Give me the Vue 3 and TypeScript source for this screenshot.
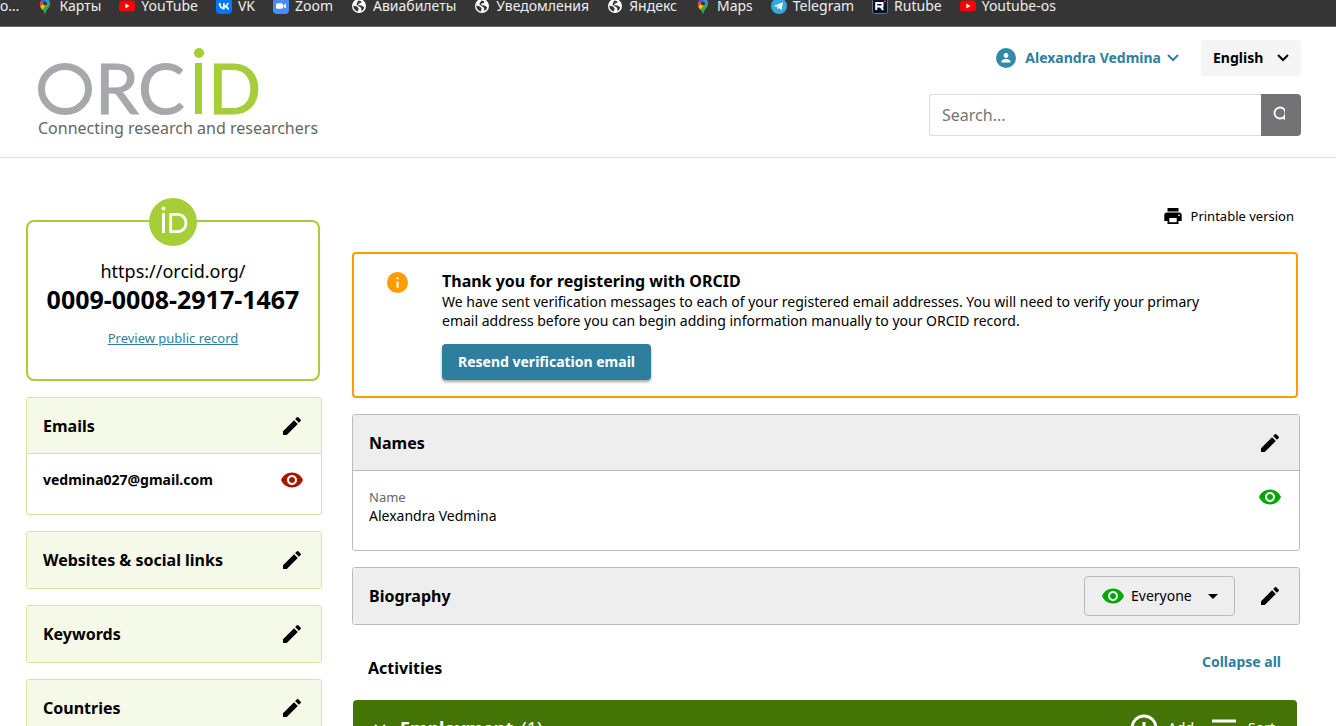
<script setup lang="ts">
import { ref } from 'vue'

type BookmarkIcon = 'none' | 'maps' | 'youtube' | 'vk' | 'zoom' | 'globe' | 'telegram' | 'rutube'

interface Bookmark {
  label: string
  icon: BookmarkIcon
}

interface SidePanel {
  title: string
  email?: string
}

const bookmarks: Bookmark[] = [
  { label: 'о…', icon: 'none' },
  { label: 'Карты', icon: 'maps' },
  { label: 'YouTube', icon: 'youtube' },
  { label: 'VK', icon: 'vk' },
  { label: 'Zoom', icon: 'zoom' },
  { label: 'Авиабилеты', icon: 'globe' },
  { label: 'Уведомления', icon: 'globe' },
  { label: 'Яндекс', icon: 'globe' },
  { label: 'Maps', icon: 'maps' },
  { label: 'Telegram', icon: 'telegram' },
  { label: 'Rutube', icon: 'rutube' },
  { label: 'Youtube-os', icon: 'youtube' },
]

const panels: SidePanel[] = [
  { title: 'Emails', email: 'vedmina027@gmail.com' },
  { title: 'Websites & social links' },
  { title: 'Keywords' },
  { title: 'Countries' },
]

const pencil =
  'M3 17.25V21h3.75L17.81 9.94l-3.75-3.75L3 17.25zM20.71 7.04a1 1 0 0 0 0-1.41l-2.34-2.34a1 1 0 0 0-1.41 0l-1.83 1.83 3.75 3.75 1.83-1.83z'
const eye =
  'M12 4.5C7 4.5 2.73 7.61 1 12c1.73 4.39 6 7.5 11 7.5s9.27-3.11 11-7.5c-1.73-4.39-6-7.5-11-7.5zM12 17c-2.76 0-5-2.24-5-5s2.24-5 5-5 5 2.24 5 5-2.24 5-5 5zm0-8c-1.66 0-3 1.34-3 3s1.34 3 3 3 3-1.34 3-3-1.34-3-3-3z'

const query = ref('')
const language = ref('English')
const visibility = ref('Everyone')
</script>

<template>
  <div class="page">
    <nav class="bookmarks" aria-label="Bookmarks">
      <a v-for="b in bookmarks" :key="b.label" class="bookmark" href="#">
        <svg v-if="b.icon === 'maps'" class="bm-icon" viewBox="0 0 16 16" aria-hidden="true">
          <path fill="#34a853" d="M3 8.2C4 10.600 7 12 7.500 15.200c.2.700.8.700 1 0C9 12 13 9.500 13.200 5.600L12.500 3z" />
          <path fill="#fbbc04" d="M3.200 8.600 8.800 2.500l2 3-5.600 6.300z" />
          <path fill="#1a73e8" d="M4 2.500 6.600 4.700 10 .6C7.600-.2 5.400.6 4 2.500z" />
          <path fill="#ea4335" d="M4 2.500C2.600 4.200 2.500 6.600 3.200 8.600L6.600 4.700z" />
          <path fill="#4285f4" d="M10 .6 6.600 4.700l3 2.500L12.600 3C12 1.800 11 .9 10 .6z" />
          <circle cx="8" cy="5.600" r="2" fill="#353535" />
        </svg>
        <svg v-else-if="b.icon === 'youtube'" class="bm-icon" viewBox="0 0 16 16" aria-hidden="true">
          <rect x="0" y="2.500" width="16" height="11" rx="3" fill="#f00" />
          <path fill="#fff" d="M6.300 5.600v4.800L10.500 8z" />
        </svg>
        <svg v-else-if="b.icon === 'vk'" class="bm-icon" viewBox="0 0 16 16" aria-hidden="true">
          <rect width="16" height="16" rx="4" fill="#07f" />
          <path fill="#fff" d="M8.600 11.500C5 11.500 2.900 9 2.800 5h1.800c.1 2.900 1.300 4.200 2.400 4.500V5h1.700v2.500C9.800 7.400 10.800 6.300 11.200 5h1.700c-.3 1.500-1.400 2.600-2.200 3.100.8.400 2 1.300 2.500 3.400h-1.900c-.4-1.200-1.400-2.200-2.600-2.300z" />
        </svg>
        <svg v-else-if="b.icon === 'zoom'" class="bm-icon" viewBox="0 0 16 16" aria-hidden="true">
          <rect width="16" height="16" rx="4" fill="#4a8cff" />
          <rect x="3" y="5.200" width="7" height="5.600" rx="1.500" fill="#fff" />
          <path fill="#fff" d="m10.500 7.200 2.500-1.800v5.200l-2.500-1.800z" />
        </svg>
        <svg v-else-if="b.icon === 'globe'" class="bm-icon" viewBox="0 0 16 16" aria-hidden="true">
          <circle cx="8" cy="8" r="7" fill="#fff" />
          <path fill="#353535" d="M2.300 7.600 6 8.400l1.600 1.800L7 13.400C4.400 13.200 2.300 10.800 2.300 7.600zM7.400 2.600l3 .6-.6 1.800-2.600.8.400 1.400 3 .4 2.600 1.600-.8 2.400-2 1.400-.4-3.200L7.400 8 5.200 6.200z" />
        </svg>
        <svg v-else-if="b.icon === 'telegram'" class="bm-icon" viewBox="0 0 16 16" aria-hidden="true">
          <circle cx="8" cy="8" r="8" fill="#34a9e0" />
          <path fill="#fff" d="m3 7.900 9-3.700-1.500 7.700-2.600-1.900-1.300 1.400-.3-2.400L10 6.200 5.200 8.900z" />
        </svg>
        <svg v-else-if="b.icon === 'rutube'" class="bm-icon" viewBox="0 0 16 16" aria-hidden="true">
          <rect x=".5" y=".5" width="15" height="15" rx="2" fill="#041330" stroke="#6a7280" />
          <path fill="none" stroke="#fff" stroke-width="2" d="M4.200 12V5h6.300v3.600H4.200M8.500 8.600l2.700 3.400" />
          <circle cx="13" cy="3.400" r="1.200" fill="#ed143b" />
        </svg>
        <span>{{ b.label }}</span>
      </a>
    </nav>

    <header class="header">
      <div class="brand">
        <svg class="logo" viewBox="0 0 224 68" role="img" aria-label="ORCID">
          <g class="logo-gray">
            <ellipse cx="27" cy="41" rx="23.500" ry="22.500" />
            <text x="57" y="66">R</text>
            <text x="100" y="66">C</text>
          </g>
          <g class="logo-green">
            <circle cx="161" cy="5" r="5" />
            <rect x="157" y="15" width="7" height="51" />
            <text x="170" y="66">D</text>
          </g>
        </svg>
        <span class="tagline">Connecting research and researchers</span>
      </div>

      <div class="tools">
        <div class="account">
          <button class="user" type="button">
            <svg class="avatar" viewBox="0 0 20 20" aria-hidden="true">
              <circle cx="10" cy="10" r="10" fill="#3489ab" />
              <circle cx="10" cy="7.500" r="2.400" fill="#fff" />
              <path fill="#fff" d="M5.500 14.500v-1c0-1.800 3-2.600 4.500-2.600s4.500.8 4.500 2.600v1z" />
            </svg>
            <span>Alexandra Vedmina</span>
            <svg class="chevron" viewBox="0 0 12 8" aria-hidden="true"><path d="m1 1 5 5 5-5" /></svg>
          </button>
          <div class="language">
            <select v-model="language" aria-label="Language">
              <option>English</option>
            </select>
            <svg class="chevron" viewBox="0 0 12 8" aria-hidden="true"><path d="m1 1 5 5 5-5" /></svg>
          </div>
        </div>
        <form class="search" role="search" @submit.prevent>
          <input v-model="query" type="text" placeholder="Search..." aria-label="Search" />
          <button type="submit" aria-label="Run search">
            <svg viewBox="0 0 12 14" aria-hidden="true">
              <circle cx="7" cy="7" r="5.500" fill="none" stroke="#fff" stroke-width="1.800" />
              <path stroke="#fff" stroke-width="2" d="m10 11 3 3" />
            </svg>
          </button>
        </form>
      </div>
    </header>

    <div class="content">
      <aside class="sidebar">
        <section class="id-card">
          <svg class="id-badge" viewBox="0 0 48 48" role="img" aria-label="ORCID iD">
            <circle cx="24" cy="24" r="24" fill="#a6ce39" />
            <circle cx="14.500" cy="10.500" r="1.900" fill="#fff" />
            <rect x="13" y="15" width="3" height="20" fill="#fff" />
            <path fill="none" stroke="#fff" stroke-width="2.800" d="M21.700 16.400h6.300c6 0 9 4.200 9 8.600s-3 8.600-9 8.600h-6.300z" />
          </svg>
          <span class="id-host">https://orcid.org/</span>
          <strong class="id-number">0009-0008-2917-1467</strong>
          <a class="preview" href="#">Preview public record</a>
        </section>

        <section v-for="p in panels" :key="p.title" class="panel green">
          <div class="panel-head">
            <h2>{{ p.title }}</h2>
            <button class="icon-button" type="button" :aria-label="'Edit ' + p.title">
              <svg viewBox="0 0 24 24" aria-hidden="true"><path :d="pencil" /></svg>
            </button>
          </div>
          <div v-if="p.email" class="email-row">
            <strong>{{ p.email }}</strong>
            <svg class="eye private" viewBox="0 0 24 24" aria-hidden="true"><path :d="eye" /></svg>
          </div>
        </section>
      </aside>

      <main class="main">
        <a class="print" href="#">
          <svg viewBox="0 0 20 20" aria-hidden="true">
            <path fill-rule="evenodd" d="M4.500 2h11v3.500h-11zM4 6.500h12a2.800 2.800 0 0 1 2.700 2.800V15h-3.200v3h-11v-3H1.300V9.300A2.800 2.800 0 0 1 4 6.500zM6.300 12v4.200h7.400V12zM16 8.400a.9.900 0 1 0 0 1.800.9.900 0 0 0 0-1.800z" />
          </svg>
          <span>Printable version</span>
        </a>

        <section class="notice">
          <svg class="info" viewBox="0 0 20 20" aria-hidden="true">
            <circle cx="10" cy="10" r="10" fill="#ff9c00" />
            <path fill="#fff" d="M9 5h2v2H9zM9 9h2v6H9z" />
          </svg>
          <div class="notice-body">
            <h2>Thank you for registering with ORCID</h2>
            <p>
              We have sent verification messages to each of your registered email addresses. You will need to
              verify your primary email address before you can begin adding information manually to your ORCID
              record.
            </p>
            <button class="resend" type="button">Resend verification email</button>
          </div>
        </section>

        <section class="panel gray">
          <div class="panel-head">
            <h2>Names</h2>
            <button class="icon-button" type="button" aria-label="Edit Names">
              <svg viewBox="0 0 24 24" aria-hidden="true"><path :d="pencil" /></svg>
            </button>
          </div>
          <div class="name-row">
            <dl>
              <dt>Name</dt>
              <dd>Alexandra Vedmina</dd>
            </dl>
            <svg class="eye public" viewBox="0 0 24 24" aria-hidden="true"><path :d="eye" /></svg>
          </div>
        </section>

        <section class="panel gray">
          <div class="panel-head">
            <h2>Biography</h2>
            <div class="visibility">
              <svg class="eye public" viewBox="0 0 24 24" aria-hidden="true"><path :d="eye" /></svg>
              <select v-model="visibility" aria-label="Biography visibility">
                <option>Everyone</option>
              </select>
              <svg class="caret" viewBox="0 0 10 5" aria-hidden="true"><path d="M0 0h10L5 5z" /></svg>
            </div>
            <button class="icon-button" type="button" aria-label="Edit Biography">
              <svg viewBox="0 0 24 24" aria-hidden="true"><path :d="pencil" /></svg>
            </button>
          </div>
        </section>

        <div class="activities">
          <h2>Activities</h2>
          <button class="collapse" type="button">Collapse all</button>
        </div>

        <section class="employment">
          <button class="toggle" type="button">
            <svg class="chevron" viewBox="0 0 12 8" aria-hidden="true"><path d="m1 1 5 5 5-5" /></svg>
            <strong>Employment</strong>
            <span>(1)</span>
          </button>
          <button class="action" type="button">
            <svg viewBox="0 0 28 28" aria-hidden="true">
              <circle cx="14" cy="14" r="12" />
              <path d="M14 8v12M8 14h12" />
            </svg>
            <span>Add</span>
          </button>
          <button class="action" type="button">
            <svg viewBox="0 0 28 28" aria-hidden="true"><path d="M2 7h24M2 14h16M2 21h8" /></svg>
            <span>Sort</span>
          </button>
        </section>
      </main>
    </div>
  </div>
</template>

<style>
html {
  scrollbar-width: none;
}

body {
  margin: 0;
  background: #fff;
}
</style>

<style scoped>
.page {
  height: 100vh;
  overflow: hidden;
  font-family: 'Noto Sans', sans-serif;
  font-size: 14px;
  line-height: 20px;
  color: #000;
}

.page * {
  box-sizing: border-box;
}

h2,
p,
dl,
dd {
  margin: 0;
}

h2 {
  font-size: 16px;
  line-height: 24px;
  font-weight: 700;
}

svg {
  display: block;
  flex: none;
}

button,
select,
input {
  font: inherit;
  color: inherit;
}

button {
  padding: 0;
  border: 0;
  background: none;
  cursor: pointer;
}

select {
  appearance: none;
  border: 0;
  background: none;
}

.bookmarks {
  display: flex;
  align-items: flex-end;
  gap: 18px;
  height: 27px;
  padding-bottom: 10px;
  overflow: hidden;
  background: #353535;
  border-bottom: 1px solid #6b6b6b;
}

.bookmark {
  display: flex;
  align-items: center;
  gap: 6px;
  color: #eee;
  white-space: nowrap;
  text-decoration: none;
}

.bm-icon {
  width: 16px;
  height: 16px;
}

.header {
  display: flex;
  justify-content: space-between;
  padding: 13px 35px 17px 38px;
  border-bottom: 1px solid #ddd;
}

.brand {
  display: flex;
  flex-direction: column;
  padding-top: 8px;
}

.logo {
  width: 224px;
  height: 68px;
}

.logo text {
  font-family: Lato, sans-serif;
  font-size: 70px;
  stroke-width: 1;
}

.logo ellipse {
  fill: none;
  stroke-width: 7;
}

.logo-gray {
  fill: #a6a8ab;
  stroke: #a6a8ab;
}

.logo-green {
  fill: #a6ce39;
  stroke: #a6ce39;
  stroke-width: 0;
}

.tagline {
  font-size: 16px;
  line-height: 24px;
  color: #666;
}

.tools {
  display: flex;
  flex-direction: column;
  align-items: flex-end;
  gap: 18px;
}

.account {
  display: flex;
  align-items: center;
  gap: 22px;
}

.user {
  display: flex;
  align-items: center;
  color: #2e7f9f;
  font-weight: 700;
}

.avatar {
  width: 20px;
  height: 20px;
  margin-right: 9px;
}

.chevron {
  width: 12px;
  height: 8px;
  fill: none;
  stroke: currentColor;
  stroke-width: 2;
}

.user .chevron {
  margin-left: 6px;
}

.language {
  display: grid;
  align-items: center;
  width: 100px;
  height: 36px;
  border-radius: 4px;
  background: #f5f5f5;
}

.language select {
  grid-area: 1 / 1;
  height: 36px;
  padding: 0 12px;
  font-weight: 700;
}

.language .chevron {
  grid-area: 1 / 1;
  justify-self: end;
  margin-right: 12px;
  pointer-events: none;
}

.search {
  display: flex;
  width: 372px;
  height: 42px;
}

.search input {
  flex: 1;
  min-width: 0;
  padding: 0 12px;
  border: 1px solid #ddd;
  border-right: 0;
  border-radius: 3px 0 0 3px;
  font-size: 16px;
  outline: 0;
}

.search input::placeholder {
  color: #757575;
}

.search button {
  width: 40px;
  padding: 0 0 4px 12px;
  border-radius: 0 4px 4px 0;
  background: #737376;
}

.search svg {
  width: 12px;
  height: 14px;
}

.content {
  display: flex;
  gap: 30px;
  padding: 0 36px 0 26px;
}

.sidebar {
  flex: none;
  width: 296px;
  padding-top: 62px;
}

.id-card {
  display: flex;
  flex-direction: column;
  align-items: center;
  height: 161px;
  margin-right: 2px;
  border: 2px solid #a6ce39;
  border-radius: 8px;
}

.id-badge {
  width: 48px;
  height: 48px;
  margin-top: -24px;
}

.id-host {
  margin-top: 13px;
  font-size: 18px;
  line-height: 24px;
}

.id-number {
  font-size: 25px;
  line-height: 32px;
}

.preview {
  margin-top: 13px;
  font-size: 13px;
  color: #2e7f9f;
}

.panel {
  margin-top: 16px;
  border: 1px solid;
  border-radius: 3px;
}

.panel-head {
  display: flex;
  align-items: center;
  height: 56px;
  padding: 0 17px 0 16px;
  border-radius: 2px;
}

.panel-head h2 {
  flex: 1;
}

.green {
  border-color: #d3e69c;
}

.green .panel-head {
  background: #f5f9e8;
}

.gray {
  border-color: #bbb;
}

.gray .panel-head {
  background: #eee;
}

.icon-button svg,
.eye {
  width: 24px;
  height: 24px;
}

.private {
  fill: #a91600;
}

.public {
  fill: #00a800;
}

.email-row {
  display: flex;
  align-items: center;
  justify-content: space-between;
  height: 61px;
  margin-top: -1px;
  padding: 0 17px 8px 16px;
  border-top: 1px solid #d3e69c;
}

.main {
  flex: 1;
  min-width: 0;
  padding-top: 46px;
}

.print {
  display: flex;
  align-items: center;
  justify-content: flex-end;
  gap: 8px;
  height: 24px;
  padding-right: 6px;
  color: #000;
  font-size: 13px;
  text-decoration: none;
}

.print svg {
  width: 20px;
  height: 20px;
}

.notice {
  display: flex;
  gap: 34px;
  margin: 24px 2px 0 0;
  padding: 16px 34px 16px 33px;
  border: 2px solid #ff9c00;
  border-radius: 4px;
}

.info {
  width: 21px;
  height: 21px;
  margin-top: 2px;
}

.notice h2 {
  line-height: 22px;
}

.notice p {
  max-width: 788px;
  line-height: 19px;
}

.resend {
  height: 36px;
  margin-top: 14px;
  padding: 0 16px;
  border-radius: 4px;
  background: #2e7f9f;
  color: #fff;
  font-weight: 700;
  box-shadow: 0 2px 3px rgba(0, 0, 0, 0.35);
}

.name-row {
  display: flex;
  justify-content: space-between;
  height: 80px;
  margin-top: -1px;
  padding: 14px 17px 0 16px;
  border-top: 1px solid #bbb;
}

dt {
  font-size: 13px;
  line-height: 24px;
  color: #666;
}

dd {
  line-height: 14px;
}

.visibility {
  display: flex;
  align-items: center;
  height: 40px;
  margin-right: 23px;
  padding: 0 16px;
  border: 1px solid #bbb;
  border-radius: 4px;
}

.visibility select {
  width: 90px;
  height: 38px;
  margin-right: -7px;
  padding: 0 0 0 6px;
}

.caret {
  width: 10px;
  height: 5px;
  pointer-events: none;
}

.activities {
  display: flex;
  align-items: center;
  justify-content: space-between;
  height: 75px;
  padding: 0 19px 2px 16px;
}

.activities h2 {
  padding-top: 12px;
}

.collapse {
  color: #2e7f9f;
  font-weight: 700;
}

.employment {
  display: flex;
  align-items: center;
  gap: 16px;
  height: 56px;
  margin: 0 3px 0 1px;
  padding: 0 22px 0 21px;
  border-radius: 4px;
  background: #447405;
  color: #fff;
}

.toggle {
  display: flex;
  flex: 1;
  align-items: center;
  gap: 8px;
  font-size: 18px;
}

.toggle .chevron {
  margin-right: 6px;
}

.action {
  display: flex;
  align-items: center;
  gap: 10px;
}

.action svg {
  width: 28px;
  height: 28px;
  fill: none;
  stroke: currentColor;
  stroke-width: 3;
}
</style>
